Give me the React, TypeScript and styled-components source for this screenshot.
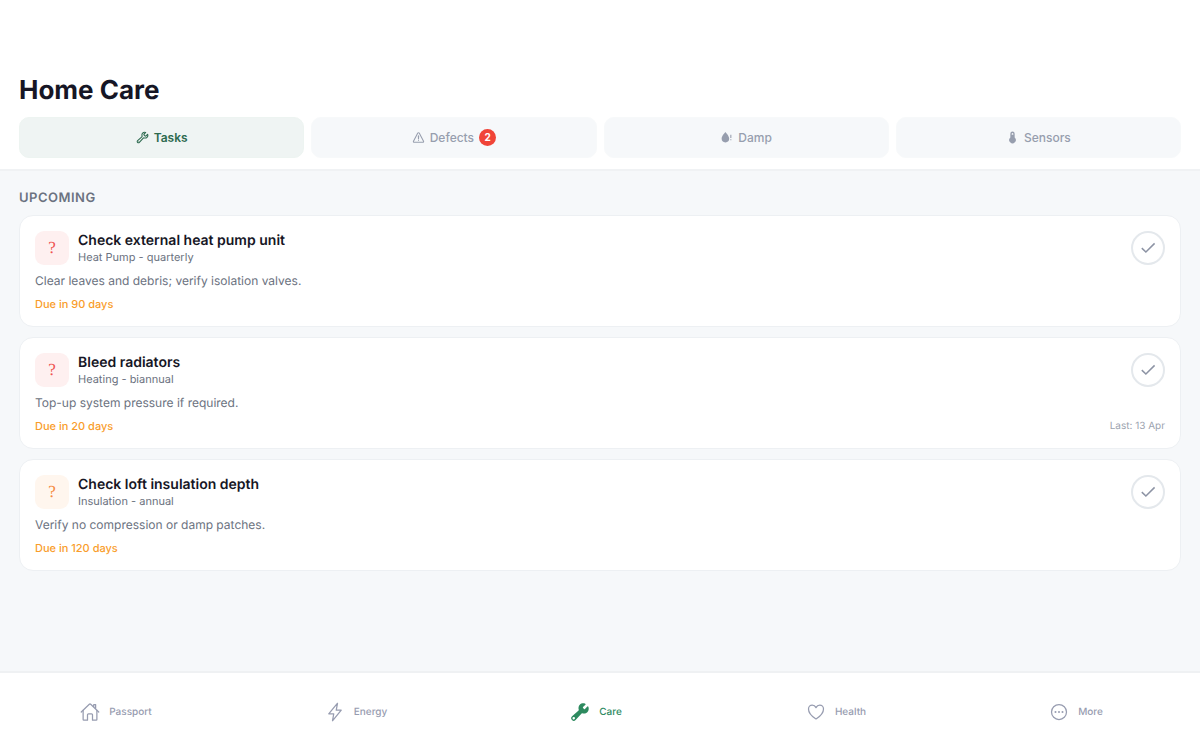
import React from "react";
import styled, { createGlobalStyle } from "styled-components";
import {
  IoBuild,
  IoBuildOutline,
  IoEllipsisHorizontalCircleOutline,
  IoFlashOutline,
  IoHeartOutline,
  IoHomeOutline,
  IoWarningOutline,
} from "react-icons/io5";

const GlobalStyle = createGlobalStyle`
  *, *::before, *::after { box-sizing: border-box; }
  body {
    margin: 0;
    font-family: Inter, "Liberation Sans", sans-serif;
    text-rendering: geometricPrecision;
    color: #161625;
    background: #f6f8fa;
  }
  button { font: inherit; cursor: pointer; }
`;

const Page = styled.div`
  display: flex;
  flex-direction: column;
  min-height: 100vh;
`;

const Header = styled.header`
  padding: 73px 19px 11px;
  background: #fff;
  border-bottom: 2px solid #f0f2f4;
`;

const Title = styled.h1`
  margin: 0 0 8px;
  font-size: 26px;
  line-height: 36px;
  font-weight: 700;
`;

const Tabs = styled.div`
  display: flex;
  gap: 7px;
`;

const Tab = styled.button<{ $active?: boolean }>`
  flex: 1;
  display: flex;
  align-items: center;
  justify-content: center;
  gap: 5px;
  height: 41px;
  padding: 0;
  border: 1px solid ${(p) => (p.$active ? "#edf4f1" : "#f7f9fa")};
  border-radius: 10px;
  background: ${(p) => (p.$active ? "#eff4f3" : "#f6f8fa")};
  color: ${(p) => (p.$active ? "#2d6a4f" : "#979eae")};
  font-size: 12px;
  font-weight: ${(p) => (p.$active ? 600 : 500)};
`;

const TabIcon = styled.span`
  display: flex;
  svg [stroke-width] { stroke-width: 42px; }
`;

const Count = styled.span`
  width: 17px;
  line-height: 17px;
  border-radius: 9px;
  background: #f04438;
  color: #fff;
  font-size: 10px;
  font-weight: 700;
  text-align: center;
`;

const Main = styled.main`
  flex: 1;
  padding: 18px 19px;
`;

const SectionTitle = styled.h2`
  margin: 0 0 7px;
  font-size: 13px;
  line-height: 19px;
  font-weight: 600;
  letter-spacing: 0.5px;
  text-transform: uppercase;
  color: #6b7280;
`;

const TaskList = styled.ul`
  display: flex;
  flex-direction: column;
  gap: 10px;
  margin: 0;
  padding: 0;
  list-style: none;
`;

const Card = styled.li`
  padding: 15px 15px 14px;
  border: 1px solid #edf0f3;
  border-radius: 14px;
  background: #fff;
`;

const CardTop = styled.div`
  display: flex;
  align-items: center;
  gap: 9px;
`;

const Badge = styled.span<{ $tone: Tone }>`
  width: 34px;
  line-height: 34px;
  border-radius: 9px;
  background: ${(p) => (p.$tone === "red" ? "#fef0f0" : "#fff6ee")};
  color: ${(p) => (p.$tone === "red" ? "#ef5350" : "#f5893d")};
  font-family: "Liberation Serif", serif;
  font-size: 17px;
  text-align: center;
`;

const CardHeading = styled.div`
  flex: 1;
`;

const TaskName = styled.h3`
  margin: 0;
  font-size: 14px;
  line-height: 19px;
  font-weight: 600;
`;

const TaskMeta = styled.p`
  margin: 0;
  font-size: 11px;
  line-height: 15px;
  color: #6b7280;
`;

const DoneButton = styled.button`
  display: flex;
  align-items: center;
  justify-content: center;
  width: 34px;
  height: 34px;
  padding: 0;
  border: 2px solid #e4e8ec;
  border-radius: 50%;
  background: #fff;
  color: #8c93a4;
`;

const Description = styled.p`
  margin: 8px 0;
  font-size: 12px;
  line-height: 16px;
  color: #6b7280;
`;

const CardFooter = styled.div`
  display: flex;
  justify-content: space-between;
  font-size: 11px;
  line-height: 15px;
`;

const Due = styled.span`
  color: #f99d2a;
  font-weight: 500;
`;

const Last = styled.span`
  color: #9ca3af;
  font-size: 10px;
`;

const Nav = styled.nav`
  display: flex;
  height: 79px;
  background: #fff;
  border-top: 2px solid #eff1f3;
`;

const NavLink = styled.a<{ $active?: boolean }>`
  flex: 1;
  display: flex;
  align-items: center;
  justify-content: center;
  gap: 9px;
  padding-right: 8px;
  color: ${(p) => (p.$active ? "#2d8a5f" : "#979cb0")};
  font-size: 10px;
  font-weight: 500;
  text-decoration: none;
`;

const WaterAlertIcon = () => (
  <svg width="13" height="13" viewBox="0 0 24 24" fill="currentColor" aria-hidden="true">
    <path d="M10 21a7 7 0 0 1-7-7C3 9.300 10 2 10 2s7 7.300 7 12a7 7 0 0 1-7 7ZM19 7h2v6h-2ZM19 15h2v2h-2Z" />
  </svg>
);

const ThermometerIcon = () => (
  <svg width="13" height="13" viewBox="0 0 24 24" fill="currentColor" aria-hidden="true">
    <path d="M16 12V5a4 4 0 0 0-8 0v7a6 6 0 1 0 8 0ZM12 3.500A1.500 1.500 0 0 1 13.500 5v2h-3V5A1.500 1.500 0 0 1 12 3.500Z" />
  </svg>
);

const CheckIcon = () => (
  <svg width="18" height="18" viewBox="0 0 18 18" fill="none" stroke="currentColor" strokeWidth="1.5" aria-hidden="true">
    <path d="M2.800 9.100 6.900 13 15.600 4.400" />
  </svg>
);

type Tone = "red" | "orange";

interface Task {
  name: string;
  meta: string;
  description: string;
  due: string;
  last?: string;
  tone: Tone;
}

const tasks: Task[] = [
  {
    name: "Check external heat pump unit",
    meta: "Heat Pump - quarterly",
    description: "Clear leaves and debris; verify isolation valves.",
    due: "Due in 90 days",
    tone: "red",
  },
  {
    name: "Bleed radiators",
    meta: "Heating - biannual",
    description: "Top-up system pressure if required.",
    due: "Due in 20 days",
    last: "Last: 13 Apr",
    tone: "red",
  },
  {
    name: "Check loft insulation depth",
    meta: "Insulation - annual",
    description: "Verify no compression or damp patches.",
    due: "Due in 120 days",
    tone: "orange",
  },
];

const tabs = [
  { label: "Tasks", icon: <IoBuildOutline size={13} />, active: true },
  { label: "Defects", icon: <IoWarningOutline size={13} />, count: 2 },
  { label: "Damp", icon: <WaterAlertIcon /> },
  { label: "Sensors", icon: <ThermometerIcon /> },
];

const links = [
  { label: "Passport", icon: <IoHomeOutline size={20} /> },
  { label: "Energy", icon: <IoFlashOutline size={20} /> },
  { label: "Care", icon: <IoBuild size={20} />, active: true },
  { label: "Health", icon: <IoHeartOutline size={20} /> },
  { label: "More", icon: <IoEllipsisHorizontalCircleOutline size={20} /> },
];

export default function App() {
  return (
    <Page>
      <GlobalStyle />
      <Header>
        <Title>Home Care</Title>
        <Tabs role="tablist">
          {tabs.map((tab) => (
            <Tab key={tab.label} type="button" role="tab" aria-selected={!!tab.active} $active={tab.active}>
              <TabIcon>{tab.icon}</TabIcon>
              {tab.label}
              {tab.count && <Count>{tab.count}</Count>}
            </Tab>
          ))}
        </Tabs>
      </Header>
      <Main>
        <SectionTitle>Upcoming</SectionTitle>
        <TaskList>
          {tasks.map((task) => (
            <Card key={task.name}>
              <CardTop>
                <Badge $tone={task.tone}>?</Badge>
                <CardHeading>
                  <TaskName>{task.name}</TaskName>
                  <TaskMeta>{task.meta}</TaskMeta>
                </CardHeading>
                <DoneButton type="button" aria-label={`Mark ${task.name} as done`}>
                  <CheckIcon />
                </DoneButton>
              </CardTop>
              <Description>{task.description}</Description>
              <CardFooter>
                <Due>{task.due}</Due>
                {task.last && <Last>{task.last}</Last>}
              </CardFooter>
            </Card>
          ))}
        </TaskList>
      </Main>
      <Nav>
        {links.map((link) => (
          <NavLink key={link.label} href="#" $active={link.active} aria-current={link.active ? "page" : undefined}>
            {link.icon}
            {link.label}
          </NavLink>
        ))}
      </Nav>
    </Page>
  );
}
